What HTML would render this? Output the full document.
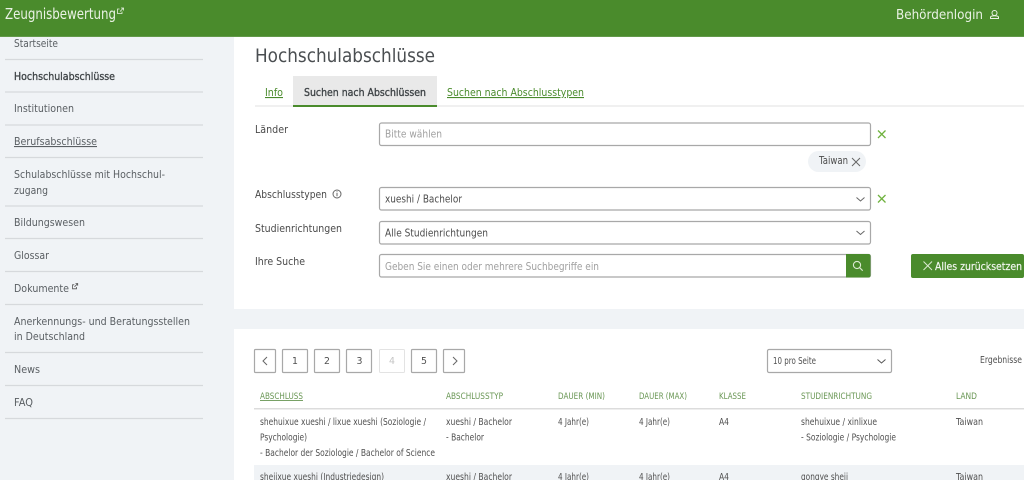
<!DOCTYPE html>
<html lang="de"><head><meta charset="utf-8"><title>Hochschulabschlüsse</title>
<style>
html,body{margin:0;padding:0;width:1024px;height:480px;overflow:hidden;background:#fff}
svg{display:block;filter:blur(.25px)}
text{font-family:"DejaVu Sans","Liberation Sans",sans-serif;font-size:11px;fill:#555a5e}
.n{fill:#5a5f63}
.t{font-size:9.4px;fill:#505050}
.h{font-size:9px;fill:#6a9755}
.f{font-size:11px;fill:#4a4a4a}
.p{font-size:10.2px;fill:#a0a0a0}
.v{font-size:10.2px;fill:#4c4c4c}
.w{fill:#eaf2e5}
.s{stroke-width:.3}
.l{stroke:#d6d9dc;stroke-width:1.2}
.b{fill:#fff;stroke:#a8a8a8;stroke-width:1.2}
.ic{fill:none;stroke:#666;stroke-width:1}
.gx{fill:none;stroke:#6fb23e;stroke-width:1.3}
</style></head><body>
<svg width="1024" height="480" viewBox="0 0 1024 480" xmlns="http://www.w3.org/2000/svg">
<rect width="1024" height="480" fill="#fff"/>
<rect x="0" y="37" width="234" height="443" fill="#f0f3f6"/>
<rect x="234" y="309" width="790" height="20" fill="#f0f3f6"/>

<!-- header -->
<rect width="1024" height="37" fill="#4a8b2c"/>
<rect y="36" width="1024" height="1" fill="#62994a"/>
<text class="w" x="5" y="19" style="font-size:15px" textLength="111" lengthAdjust="spacingAndGlyphs">Zeugnisbewertung</text>
<g fill="none" stroke="#eaf2e5" stroke-width=".8"><path d="M122 11.5v2h-4.500v-4.500h2"/><path d="M120 11.500l3.500-3.500M121 8h2.500v2.500"/></g>
<text class="w" x="896" y="19" style="font-size:13.500px" textLength="87" lengthAdjust="spacingAndGlyphs">Behördenlogin</text>
<g fill="none" stroke="#eaf2e5" stroke-width="1"><circle cx="994.500" cy="13" r="2.500"/><path d="M990.500 18.500h8v-1.500c-1-1.600-7-1.600-8 0z"/></g>

<!-- sidebar -->
<g>
<text class="n" x="14" y="47" textLength="44" lengthAdjust="spacingAndGlyphs">Startseite</text>
<line class="l" x1="5" x2="203" y1="59.500" y2="59.500"/>
<text x="14" y="80" textLength="101" lengthAdjust="spacingAndGlyphs" style="fill:#3f4447;stroke:#3f4447;stroke-width:.35">Hochschulabschlüsse</text>
<line class="l" x1="5" x2="203" y1="92" y2="92"/>
<text class="n" x="14" y="112" textLength="60" lengthAdjust="spacingAndGlyphs">Institutionen</text>
<line class="l" x1="5" x2="203" y1="125" y2="125"/>
<text class="n" x="14" y="145" textLength="83" lengthAdjust="spacingAndGlyphs" text-decoration="underline">Berufsabschlüsse</text>
<line class="l" x1="5" x2="203" y1="157.500" y2="157.500"/>
<text class="n" x="14" y="178" textLength="151" lengthAdjust="spacingAndGlyphs">Schulabschlüsse mit Hochschul-</text>
<text class="n" x="14" y="194" textLength="34" lengthAdjust="spacingAndGlyphs">zugang</text>
<line class="l" x1="5" x2="203" y1="206" y2="206"/>
<text class="n" x="14" y="226" textLength="71" lengthAdjust="spacingAndGlyphs">Bildungswesen</text>
<line class="l" x1="5" x2="203" y1="238.500" y2="238.500"/>
<text class="n" x="14" y="259" textLength="35" lengthAdjust="spacingAndGlyphs">Glossar</text>
<line class="l" x1="5" x2="203" y1="271.500" y2="271.500"/>
<text class="n" x="14" y="292" textLength="55" lengthAdjust="spacingAndGlyphs">Dokumente</text>
<g fill="none" stroke="#555" stroke-width=".8"><path d="M76.500 287v1.800h-4v-4h1.800"/><path d="M74.500 286.800l3-3M75.500 283.500h2.200v2.200"/></g>
<line class="l" x1="5" x2="203" y1="304.500" y2="304.500"/>
<text class="n" x="14" y="325" textLength="176" lengthAdjust="spacingAndGlyphs">Anerkennungs- und Beratungsstellen</text>
<text class="n" x="14" y="340" textLength="71" lengthAdjust="spacingAndGlyphs">in Deutschland</text>
<line class="l" x1="5" x2="203" y1="352.500" y2="352.500"/>
<text class="n" x="14" y="373" textLength="26" lengthAdjust="spacingAndGlyphs">News</text>
<line class="l" x1="5" x2="203" y1="385.500" y2="385.500"/>
<text class="n" x="14" y="406" textLength="19" lengthAdjust="spacingAndGlyphs">FAQ</text>
<line class="l" x1="5" x2="203" y1="418.500" y2="418.500"/>
</g>

<!-- title + tabs -->
<text x="255" y="62" style="font-size:19px;fill:#4a4e51" textLength="180" lengthAdjust="spacingAndGlyphs">Hochschulabschlüsse</text>
<line x1="255" x2="1024" y1="106" y2="106" stroke="#e2e2e2"/>
<rect x="293" y="76" width="144" height="30" fill="#e9e9e9"/>
<rect x="293" y="105" width="144" height="2" fill="#4a8b2c"/>
<text x="265" y="96" style="fill:#4a8b2c" textLength="18" lengthAdjust="spacingAndGlyphs" text-decoration="underline">Info</text>
<text x="304" y="96" style="fill:#3f4447;stroke:#3f4447;stroke-width:.35" textLength="122" lengthAdjust="spacingAndGlyphs">Suchen nach Abschlüssen</text>
<text x="447" y="96" style="fill:#4a8b2c" textLength="137" lengthAdjust="spacingAndGlyphs" text-decoration="underline">Suchen nach Abschlusstypen</text>

<!-- form -->
<text class="f" x="255" y="133" textLength="33" lengthAdjust="spacingAndGlyphs">Länder</text>
<rect class="b" x="379.500" y="123" width="491" height="22.500" rx="2"/>
<text class="p" x="385" y="137.500" textLength="57" lengthAdjust="spacingAndGlyphs">Bitte wählen</text>
<path class="gx" d="M878 130.500l7.500 7.500M885.500 130.500l-7.500 7.500"/>
<rect x="808" y="151" width="58" height="21" rx="10.500" fill="#f0f3f6"/>
<text class="v" x="819" y="164" textLength="29" lengthAdjust="spacingAndGlyphs">Taiwan</text>
<path class="ic" d="M852 158l8 8M860 158l-8 8"/>

<text class="f" x="255" y="198" textLength="72" lengthAdjust="spacingAndGlyphs">Abschlusstypen</text>
<circle class="ic" cx="337" cy="194" r="4" stroke-width=".8"/><path class="ic" d="M337 193v3.200M337 191.400v.9" stroke-width=".8"/>
<rect class="b" x="379.500" y="187.500" width="491" height="22.500" rx="2"/>
<text class="v" x="385" y="202.500" textLength="77" lengthAdjust="spacingAndGlyphs">xueshi / Bachelor</text>
<path class="ic" d="M856.500 197.500l4 3.500 4-3.500"/>
<path class="gx" d="M878 195l7.500 7.500M885.500 195l-7.500 7.500"/>

<text class="f" x="255" y="232" textLength="87" lengthAdjust="spacingAndGlyphs">Studienrichtungen</text>
<rect class="b" x="379.500" y="221.500" width="491" height="22.500" rx="2"/>
<text class="v" x="385" y="236.500" textLength="103" lengthAdjust="spacingAndGlyphs">Alle Studienrichtungen</text>
<path class="ic" d="M856.500 231l4 3.500 4-3.500"/>

<text class="f" x="255" y="265" textLength="50" lengthAdjust="spacingAndGlyphs">Ihre Suche</text>
<rect class="b" x="379.500" y="254.500" width="491" height="22.500" rx="2"/>
<text class="p" x="385" y="270" textLength="214" lengthAdjust="spacingAndGlyphs">Geben Sie einen oder mehrere Suchbegriffe ein</text>
<path d="M846 254h22.500a2 2 0 0 1 2 2v19.500a2 2 0 0 1-2 2H846z" fill="#4a8b2c"/>
<g fill="none" stroke="#dbe9d2" stroke-width="1.100"><circle cx="857" cy="265" r="3.600"/><path d="M859.700 267.700l3 3"/></g>
<rect x="911" y="254" width="113" height="24" rx="2" fill="#4a8b2c"/>
<path d="M923.500 261.500l8.500 8.500M932 261.500l-8.500 8.500" fill="none" stroke="#dbe9d2" stroke-width="1"/>
<text x="935" y="270" style="font-size:10.800px;fill:#f1f6ee;stroke:#f1f6ee;stroke-width:.2" textLength="87" lengthAdjust="spacingAndGlyphs">Alles zurücksetzen</text>

<!-- pagination -->
<g>
<rect class="b" x="254.500" y="349.500" width="21" height="23" rx="1"/>
<path d="M267 357l-4 4 4 4" fill="none" stroke="#666"/>
<rect class="b" x="282.500" y="349.500" width="25" height="23" rx="1"/>
<text class="t" x="295" y="364" text-anchor="middle">1</text>
<rect class="b" x="314.500" y="349.500" width="25" height="23" rx="1"/>
<text class="t" x="327" y="364" text-anchor="middle">2</text>
<rect class="b" x="346.500" y="349.500" width="25" height="23" rx="1"/>
<text class="t" x="359.500" y="364" text-anchor="middle">3</text>
<rect x="379.500" y="349.500" width="25" height="23" rx="1" fill="#fff" stroke="#e3e3e3"/>
<text class="t" x="392" y="364" text-anchor="middle" style="fill:#c4c4c4">4</text>
<rect class="b" x="411.500" y="349.500" width="25" height="23" rx="1"/>
<text class="t" x="424" y="364" text-anchor="middle">5</text>
<rect class="b" x="443.500" y="349.500" width="21" height="23" rx="1"/>
<path d="M453 357l4 4-4 4" fill="none" stroke="#666"/>
</g>
<rect class="b" x="767.500" y="349.500" width="124" height="23" rx="1.500"/>
<text class="t" x="773" y="364" textLength="43" lengthAdjust="spacingAndGlyphs">10 pro Seite</text>
<path d="M877.500 359.500l4 3.500 4-3.500" fill="none" stroke="#555"/>
<text class="t" x="980" y="363" textLength="42" lengthAdjust="spacingAndGlyphs">Ergebnisse</text>

<!-- table head -->
<text class="h" x="260" y="399" textLength="43" lengthAdjust="spacingAndGlyphs" text-decoration="underline">ABSCHLUSS</text>
<text class="h" x="446" y="399" textLength="57" lengthAdjust="spacingAndGlyphs">ABSCHLUSSTYP</text>
<text class="h" x="558" y="399" textLength="47" lengthAdjust="spacingAndGlyphs">DAUER (MIN)</text>
<text class="h" x="639" y="399" textLength="48" lengthAdjust="spacingAndGlyphs">DAUER (MAX)</text>
<text class="h" x="719" y="399" textLength="27" lengthAdjust="spacingAndGlyphs">KLASSE</text>
<text class="h" x="801" y="399" textLength="71" lengthAdjust="spacingAndGlyphs">STUDIENRICHTUNG</text>
<text class="h" x="956" y="399" textLength="21" lengthAdjust="spacingAndGlyphs">LAND</text>
<rect x="254" y="408" width="770" height="1.500" fill="#dcdcdc"/>

<!-- row 1 -->
<text class="t" x="260" y="425" textLength="166" lengthAdjust="spacingAndGlyphs">shehuixue xueshi / lixue xueshi (Soziologie /</text>
<text class="t" x="260" y="440.500" textLength="47" lengthAdjust="spacingAndGlyphs">Psychologie)</text>
<text class="t" x="260" y="456" textLength="175" lengthAdjust="spacingAndGlyphs">- Bachelor der Soziologie / Bachelor of Science</text>
<text class="t" x="446" y="425" textLength="66" lengthAdjust="spacingAndGlyphs">xueshi / Bachelor</text>
<text class="t" x="446" y="440.500" textLength="38" lengthAdjust="spacingAndGlyphs">- Bachelor</text>
<text class="t" x="558" y="425" textLength="31" lengthAdjust="spacingAndGlyphs">4 Jahr(e)</text>
<text class="t" x="639" y="425" textLength="31" lengthAdjust="spacingAndGlyphs">4 Jahr(e)</text>
<text class="t" x="719" y="425" textLength="10" lengthAdjust="spacingAndGlyphs">A4</text>
<text class="t" x="801" y="425" textLength="76" lengthAdjust="spacingAndGlyphs">shehuixue / xinlixue</text>
<text class="t" x="801" y="440.500" textLength="95" lengthAdjust="spacingAndGlyphs">- Soziologie / Psychologie</text>
<text class="t" x="956" y="425" textLength="27" lengthAdjust="spacingAndGlyphs">Taiwan</text>

<!-- row 2 -->
<rect x="254" y="465" width="770" height="15" fill="#f0f3f6"/>
<text class="t" x="260" y="480" textLength="124" lengthAdjust="spacingAndGlyphs">shejixue xueshi (Industriedesign)</text>
<text class="t" x="446" y="480" textLength="66" lengthAdjust="spacingAndGlyphs">xueshi / Bachelor</text>
<text class="t" x="558" y="480" textLength="31" lengthAdjust="spacingAndGlyphs">4 Jahr(e)</text>
<text class="t" x="639" y="480" textLength="31" lengthAdjust="spacingAndGlyphs">4 Jahr(e)</text>
<text class="t" x="719" y="480" textLength="10" lengthAdjust="spacingAndGlyphs">A4</text>
<text class="t" x="801" y="480" textLength="47" lengthAdjust="spacingAndGlyphs">gongye sheji</text>
<text class="t" x="956" y="480" textLength="27" lengthAdjust="spacingAndGlyphs">Taiwan</text>
</svg>
</body></html>
